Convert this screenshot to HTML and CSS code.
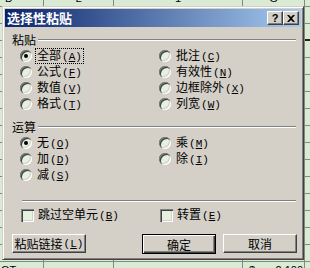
FILE: index.html
```html
<!DOCTYPE html>
<html lang="zh-CN">
<head>
    <meta charset="UTF-8">
    <title>选择性粘贴</title>
    <link rel="stylesheet" href="styles.css">
</head>
<body>
    <div class="sheet">
        <div class="row top"><span>D</span><span class="c">L</span><span class="c">1</span><span class="c">G</span><span></span></div>
        <div class="row"><span></span><span></span><span></span><span></span><span></span></div>
        <div class="row"><span></span><span></span><span></span><span></span><span class="mark"></span></div>
        <div class="row"><span></span><span></span><span></span><span></span><span></span></div>
        <div class="row"><span></span><span></span><span></span><span></span><span></span></div>
        <div class="row"><span></span><span></span><span></span><span></span><span></span></div>
        <div class="row"><span></span><span></span><span></span><span></span><span></span></div>
        <div class="row"><span></span><span></span><span></span><span></span><span></span></div>
        <div class="row"><span></span><span></span><span></span><span></span><span></span></div>
        <div class="row"><span></span><span></span><span></span><span></span><span></span></div>
        <div class="row"><span></span><span></span><span></span><span></span><span></span></div>
        <div class="row"><span></span><span></span><span></span><span></span><span></span></div>
        <div class="row"><span></span><span></span><span></span><span></span><span></span></div>
        <div class="row"><span></span><span></span><span></span><span></span><span></span></div>
        <div class="row"><span></span><span></span><span></span><span></span><span></span></div>
        <div class="row"><span></span><span></span><span></span><span></span><span></span></div>
        <div class="row"><span class="first">OT</span><span></span><span></span><span class="money"><i>$</i><i>2,100</i></span><span></span></div>
    </div>

    <div class="dialog">
        <div class="titlebar">
            <span class="title">选择性粘贴</span>
            <div class="tbtns">
                <span class="tbtn help">?</span>
                <span class="tbtn">
                    <svg width="8" height="7" viewBox="0 0 8 7"><path d="M0 0H2L4 2L6 0H8L5 3.5L8 7H6L4 5L2 7H0L3 3.5Z" fill="#000"/></svg>
                </span>
            </div>
        </div>

        <div class="content">
            <div class="group-head"><span>粘贴</span><div class="etch"></div></div>
            <div class="opts">
                <div class="opt"><span class="radio on"></span><span class="txt focus">全部<span class="mn">(<u>A</u>)</span></span></div>
                <div class="opt"><span class="radio"></span><span class="txt">批注<span class="mn">(<u>C</u>)</span></span></div>
                <div class="opt"><span class="radio"></span><span class="txt">公式<span class="mn">(<u>F</u>)</span></span></div>
                <div class="opt"><span class="radio"></span><span class="txt">有效性<span class="mn">(<u>N</u>)</span></span></div>
                <div class="opt"><span class="radio"></span><span class="txt">数值<span class="mn">(<u>V</u>)</span></span></div>
                <div class="opt"><span class="radio"></span><span class="txt">边框除外<span class="mn">(<u>X</u>)</span></span></div>
                <div class="opt"><span class="radio"></span><span class="txt">格式<span class="mn">(<u>T</u>)</span></span></div>
                <div class="opt"><span class="radio"></span><span class="txt">列宽<span class="mn">(<u>W</u>)</span></span></div>
            </div>

            <div class="group-head second"><span>运算</span><div class="etch"></div></div>
            <div class="opts">
                <div class="opt"><span class="radio on"></span><span class="txt">无<span class="mn">(<u>O</u>)</span></span></div>
                <div class="opt"><span class="radio"></span><span class="txt">乘<span class="mn">(<u>M</u>)</span></span></div>
                <div class="opt"><span class="radio"></span><span class="txt">加<span class="mn">(<u>D</u>)</span></span></div>
                <div class="opt"><span class="radio"></span><span class="txt">除<span class="mn">(<u>I</u>)</span></span></div>
                <div class="opt"><span class="radio"></span><span class="txt">减<span class="mn">(<u>S</u>)</span></span></div>
            </div>

            <div class="sep"></div>

            <div class="checks">
                <div class="opt"><span class="check"></span><span class="txt">跳过空单元<span class="mn">(<u>B</u>)</span></span></div>
                <div class="opt"><span class="check"></span><span class="txt">转置<span class="mn">(<u>E</u>)</span></span></div>
            </div>

            <div class="buttons">
                <span class="btn">粘贴链接<span class="mn">(<u>L</u>)</span></span>
                <span class="btn default">确定</span>
                <span class="btn">取消</span>
            </div>
        </div>
    </div>
</body>
</html>
```

FILE: styles.css
```css
* {
    box-sizing: border-box;
}

body {
    margin: 0;
    width: 310px;
    height: 268px;
    overflow: hidden;
    position: relative;
    background: #dbead5;
    font-family: "Noto Sans CJK SC", sans-serif;
    font-size: 12px;
    color: #000;
}

/* spreadsheet behind the dialog */
.sheet {
    margin-top: -10px;
}

.row {
    display: grid;
    grid-template-columns: 44px 70px 129px 62px 1fr;
    height: 17px;
}

.row span {
    border-right: 1px solid #7d8c7d;
    border-bottom: 1px solid #7d8c7d;
    font: 11px "Liberation Sans", sans-serif;
    line-height: 17px;
    padding-left: 5px;
    overflow: hidden;
    white-space: nowrap;
}

.row .c {
    text-align: center;
    padding-left: 0;
}

.row .first {
    padding-left: 1px;
}

.row .mark {
    border-bottom: 2px solid #222;
}

.row .money {
    display: flex;
    justify-content: space-between;
    padding: 0 1px 0 6px;
}

.row .money i {
    font-style: normal;
}

/* dialog */
.dialog {
    position: absolute;
    left: 2px;
    top: 6px;
    width: 302px;
    height: 254px;
    padding: 2px;
    background: #d4d0c8;
    border: 1px solid;
    border-color: #d4d0c8 #404040 #404040 #d4d0c8;
    box-shadow: inset 1px 1px #fff, inset -1px -1px #808080;
    display: flex;
    flex-direction: column;
}

.titlebar {
    height: 18px;
    display: flex;
    align-items: center;
    justify-content: space-between;
    padding: 0 2px 0 2px;
    background: linear-gradient(to right, #0a246a, #a6caf0);
}

.title {
    color: #fff;
    font-weight: bold;
    font-size: 13px;
    line-height: 18px;
}

.tbtns {
    display: flex;
}

.tbtn {
    width: 16px;
    height: 14px;
    display: flex;
    align-items: center;
    justify-content: center;
    background: #d4d0c8;
    border: 1px solid;
    border-color: #fff #404040 #404040 #fff;
    box-shadow: inset -1px -1px #808080;
}

.help {
    font: bold 11px "Liberation Sans", sans-serif;
    line-height: 12px;
}

.content {
    padding: 6px 5px 0 7px;
}

.group-head {
    height: 14px;
    display: flex;
    align-items: center;
    gap: 2px;
    line-height: 14px;
}

.group-head.second {
    margin-top: 8px;
}

.etch {
    flex: 1;
    height: 2px;
    border-top: 1px solid #808080;
    border-bottom: 1px solid #fff;
}

.opts {
    display: grid;
    grid-template-columns: 139px 1fr;
    margin: 1px 0 0 8px;
}

.opt {
    height: 16px;
    display: flex;
    align-items: center;
    gap: 3px;
}

.txt {
    padding: 0 1px;
    border: 1px dotted transparent;
    line-height: 12px;
    white-space: nowrap;
}

.txt.focus {
    border-color: #000;
}

.mn {
    font: 11px "Liberation Mono", monospace;
    margin-left: 1px;
}

.radio {
    width: 12px;
    height: 12px;
    flex: none;
    border-radius: 50%;
    background: #e4f1df;
    box-shadow: inset 1px 1px #808080, inset 2px 2px #404040,
                inset -1px -1px #fff, inset -2px -2px #d4d0c8;
    display: flex;
    align-items: center;
    justify-content: center;
}

.radio.on::after {
    content: "";
    width: 4px;
    height: 4px;
    border-radius: 50%;
    background: #000;
}

.sep {
    margin: 17px 0 0 10px;
    height: 2px;
    border-top: 1px solid #808080;
    border-bottom: 1px solid #fff;
}

.checks {
    display: grid;
    grid-template-columns: 139px 1fr;
    margin: 5px 0 0 9px;
}

.checks .opt {
    gap: 2px;
}

.check {
    width: 13px;
    height: 13px;
    flex: none;
    background: #e4f1df;
    box-shadow: inset 1px 1px #808080, inset 2px 2px #404040,
                inset -1px -1px #fff, inset -2px -2px #d4d0c8;
}

.buttons {
    display: flex;
    gap: 7px;
    margin: 11px -1px 0 0;
}

.btn {
    width: 74px;
    height: 19px;
    display: flex;
    align-items: center;
    justify-content: center;
    white-space: nowrap;
    background: #d4d0c8;
    border: 1px solid;
    border-color: #fff #404040 #404040 #fff;
    box-shadow: inset -1px -1px #808080;
}

.btn.default {
    margin-left: auto;
    height: 20px;
    border-color: #000;
    box-shadow: inset 1px 1px #fff, inset -1px -1px #404040, inset -2px -2px #808080;
}
```
